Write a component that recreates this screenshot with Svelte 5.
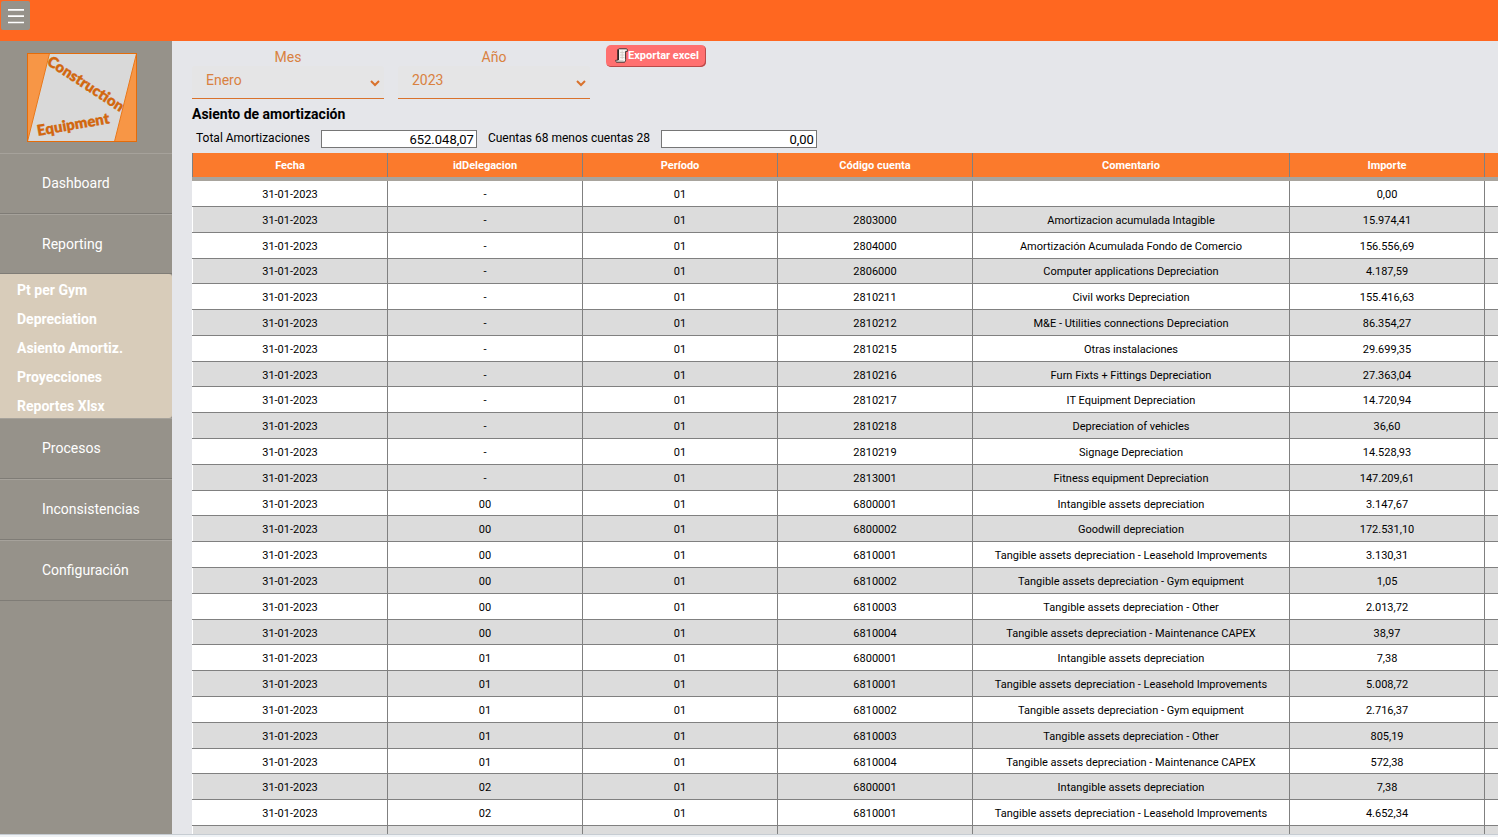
<script>
  const menuTop = ['Dashboard', 'Reporting'];
  const submenu = ['Pt per Gym', 'Depreciation', 'Asiento Amortiz.', 'Proyecciones', 'Reportes Xlsx'];
  const menuBottom = ['Procesos', 'Inconsistencias', 'Configuración'];
  const months = ['Enero', 'Febrero', 'Marzo', 'Abril', 'Mayo', 'Junio', 'Julio', 'Agosto', 'Septiembre', 'Octubre', 'Noviembre', 'Diciembre'];
  const years = ['2021', '2022', '2023'];
  const columns = ['Fecha', 'idDelegacion', 'Período', 'Código cuenta', 'Comentario', 'Importe', ''];

  let month = $state('Enero');
  let year = $state('2023');

  const date = '31-01-2023';
  const period = '01';
  const lease = 'Tangible assets depreciation - Leasehold Improvements';
  const gym = 'Tangible assets depreciation - Gym equipment';
  const other = 'Tangible assets depreciation - Other';
  const capex = 'Tangible assets depreciation - Maintenance CAPEX';
  const intangible = 'Intangible assets depreciation';

  const rows = [
    ['-', '', '', '0,00'],
    ['-', '2803000', 'Amortizacion acumulada Intagible', '15.974,41'],
    ['-', '2804000', 'Amortización Acumulada Fondo de Comercio', '156.556,69'],
    ['-', '2806000', 'Computer applications Depreciation', '4.187,59'],
    ['-', '2810211', 'Civil works Depreciation', '155.416,63'],
    ['-', '2810212', 'M&E - Utilities connections Depreciation', '86.354,27'],
    ['-', '2810215', 'Otras instalaciones', '29.699,35'],
    ['-', '2810216', 'Furn Fixts + Fittings Depreciation', '27.363,04'],
    ['-', '2810217', 'IT Equipment Depreciation', '14.720,94'],
    ['-', '2810218', 'Depreciation of vehicles', '36,60'],
    ['-', '2810219', 'Signage Depreciation', '14.528,93'],
    ['-', '2813001', 'Fitness equipment Depreciation', '147.209,61'],
    ['00', '6800001', intangible, '3.147,67'],
    ['00', '6800002', 'Goodwill depreciation', '172.531,10'],
    ['00', '6810001', lease, '3.130,31'],
    ['00', '6810002', gym, '1,05'],
    ['00', '6810003', other, '2.013,72'],
    ['00', '6810004', capex, '38,97'],
    ['01', '6800001', intangible, '7,38'],
    ['01', '6810001', lease, '5.008,72'],
    ['01', '6810002', gym, '2.716,37'],
    ['01', '6810003', other, '805,19'],
    ['01', '6810004', capex, '572,38'],
    ['02', '6800001', intangible, '7,38'],
    ['02', '6810001', lease, '4.652,34'],
    ['02', '6810002', gym, '1.204,18']
  ];
</script>

<div class="app">
  <header class="topbar">
    <button class="burger" type="button" aria-label="Menú">
      <svg width="16" height="16" viewBox="0 0 16 16" aria-hidden="true">
        <path d="M0 1.800h16M0 8.200h16M0 14.500h16" stroke="#fff" stroke-width="1.700" />
      </svg>
    </button>
  </header>

  <div class="body">
    <nav class="sidebar">
      <div class="brand">
        <svg width="110" height="89" viewBox="0 0 110 89" role="img" aria-label="Construction Equipment">
          <rect x="0.5" y="0.5" width="109" height="88" fill="#d9d9d9" />
          <path d="M0.5 0.5H22.5L0.5 88.5Z" fill="#f79646" stroke="#e8791c" />
          <path d="M109.5 0.5V88.5H87.5Z" fill="#f79646" stroke="#e8791c" />
          <rect x="0.5" y="0.5" width="109" height="88" fill="none" stroke="#e46c0a" />
          <text class="logo-text" transform="translate(19 11) rotate(33)">Construction</text>
          <text class="logo-text" transform="translate(11 83) rotate(-10)">Equipment</text>
        </svg>
      </div>
      {#each menuTop as item}
        <a class="item" href="#{item}">{item}</a>
      {/each}
      <div class="submenu">
        {#each submenu as item}
          <a href="#{item}">{item}</a>
        {/each}
      </div>
      {#each menuBottom as item}
        <a class="item" href="#{item}">{item}</a>
      {/each}
    </nav>

    <main>
      <div class="filters">
        <div class="field">
          <label for="mes">Mes</label>
          <div class="select">
            <select id="mes" bind:value={month}>
              {#each months as m}<option>{m}</option>{/each}
            </select>
            <svg width="10" height="7" viewBox="0 0 10 7" aria-hidden="true"><path d="M1 1l4 4 4-4" /></svg>
          </div>
        </div>
        <div class="field">
          <label for="anio">Año</label>
          <div class="select">
            <select id="anio" bind:value={year}>
              {#each years as y}<option>{y}</option>{/each}
            </select>
            <svg width="10" height="7" viewBox="0 0 10 7" aria-hidden="true"><path d="M1 1l4 4 4-4" /></svg>
          </div>
        </div>
        <button class="export" type="button">
          <svg width="13" height="15" viewBox="0 0 13 15" aria-hidden="true">
            <path d="M3 3C3 1.400 3.300 .8 4.200 .8H11.300C12.200 .8 12.400 1.500 12.400 3.400H10.600V11.500C10.600 13.500 10 14.200 9 14.200H2C1 14.200 .7 13.500 .7 12.300H3Z" fill="#f6f4f0" stroke="#2a2422" stroke-width=".9" />
            <path d="M3.200 1.500V12" stroke="#111" stroke-width="1.200" />
            <path d="M1.200 12.500H8.300L9 13.800H2Z" fill="#b5afa9" />
            <path d="M5 4.500H9.500M5 7H9.500M5 9.500H9.500M7.200 2.500V11" stroke="#cfcac4" stroke-width=".8" />
          </svg>
          <span>Exportar excel</span>
        </button>
      </div>

      <h1>Asiento de amortización</h1>

      <div class="totals">
        <label for="total">Total Amortizaciones</label>
        <input id="total" type="text" value="652.048,07" />
        <label for="diff">Cuentas 68 menos cuentas 28</label>
        <input id="diff" type="text" value="0,00" />
      </div>

      <div class="table-wrap">
        <table>
          <colgroup>
            <col /><col /><col /><col /><col class="wide" /><col /><col />
          </colgroup>
          <thead>
            <tr>
              {#each columns as c}<th scope="col">{c}</th>{/each}
            </tr>
          </thead>
          <tbody>
            {#each rows as [delegation, account, comment, amount]}
              <tr>
                <td>{date}</td>
                <td>{delegation}</td>
                <td>{period}</td>
                <td>{account}</td>
                <td>{comment}</td>
                <td>{amount}</td>
                <td></td>
              </tr>
            {/each}
          </tbody>
        </table>
      </div>
    </main>
  </div>
  <footer></footer>
</div>

<style>
  :global(body) {
    margin: 0;
    overflow: hidden;
  }

  .app {
    display: flex;
    flex-direction: column;
    height: 100vh;
    overflow: hidden;
    background: #e5e6ea;
    color: #000;
    font-family: Roboto, 'Liberation Sans', sans-serif;
  }

  .topbar {
    flex: none;
    height: 41px;
    background: #ff6720;
    box-sizing: border-box;
    padding: 1px;
  }

  .burger {
    display: grid;
    place-items: center;
    width: 29px;
    height: 29px;
    padding: 0;
    border: 0;
    border-radius: 2px;
    background: #96928a;
  }

  .body {
    flex: 1;
    display: flex;
    min-height: 0;
  }

  .sidebar {
    flex: none;
    width: 172px;
    background: #96928a;
    overflow: hidden;
  }

  .brand {
    padding: 12px 27px 11px;
  }

  .brand svg {
    display: block;
  }

  .logo-text {
    font: 800 15px Lato, sans-serif;
    fill: #d2670f;
    stroke: #d2670f;
    stroke-width: 0.3;
  }

  .item {
    display: block;
    padding-left: 42px;
    line-height: 59px;
    border-top: 1px solid #a6a29b;
    border-bottom: 1px solid #7f7c76;
    font-size: 14px;
    color: #fff;
    text-decoration: none;
  }

  .item:has(+ .submenu) {
    line-height: 58px;
  }

  .submenu {
    display: flex;
    flex-direction: column;
    padding-top: 2px;
    height: 142px;
    background: #d8ccba;
    border-radius: 0 3px 3px 0;
  }

  .submenu a {
    padding-left: 17px;
    line-height: 29px;
    font-size: 14px;
    font-weight: 700;
    color: #fff;
    text-decoration: none;
  }

  main {
    flex: 1;
    min-width: 0;
    display: flex;
    flex-direction: column;
    padding-left: 20px;
  }

  .filters {
    display: flex;
    align-items: flex-start;
    gap: 14px;
    padding-top: 7px;
  }

  .field {
    display: flex;
    flex-direction: column;
    width: 192px;
    color: #d9813f;
    font-size: 14px;
  }

  .field label {
    line-height: 18px;
    text-align: center;
  }

  .select {
    display: grid;
    align-items: center;
  }

  .select select,
  .select svg {
    grid-area: 1 / 1;
  }

  .select select {
    appearance: none;
    height: 33px;
    padding: 0 14px 4px;
    border: 0;
    border-bottom: 1px solid #d9722c;
    border-radius: 3px 3px 0 0;
    background: #e5e5e6;
    color: inherit;
    font: 14px Roboto, sans-serif;
  }

  .select svg {
    justify-self: end;
    margin: 2px 4px 0 0;
    fill: none;
    stroke: #d9722c;
    stroke-width: 2;
    pointer-events: none;
  }

  .export {
    display: flex;
    align-items: center;
    height: 22px;
    margin: -3px 0 0 2px;
    padding: 0 7px 1px 9px;
    border: 0;
    border-radius: 5px;
    background: #ff7070;
    box-shadow: inset -1px -1px 0 #b94a4a;
    color: #fff;
    font: 700 11px Roboto, sans-serif;
  }

  h1 {
    margin: 5px 0 6px;
    font-size: 14px;
    font-weight: 700;
    line-height: 20px;
  }

  .totals {
    display: flex;
    align-items: flex-start;
    padding-left: 4px;
    gap: 11px;
    font-size: 12px;
    line-height: 16px;
  }

  .totals input {
    box-sizing: border-box;
    width: 156px;
    height: 18px;
    padding: 0 2px;
    border: 1px solid #767676;
    background: #fff;
    font: 13px Roboto, sans-serif;
    text-align: right;
  }

  .table-wrap {
    flex: 1;
    min-height: 0;
    margin-top: 5px;
    overflow: hidden;
  }

  table {
    table-layout: fixed;
    border-collapse: collapse;
    width: 1487px;
    height: 699px;
    font-size: 11px;
    line-height: 13px;
    text-align: center;
  }

  col {
    width: 195px;
  }

  .wide {
    width: 317px;
  }

  th {
    height: 24px;
    padding: 0;
    background: #fb7a2c;
    border-left: 1px solid #808080;
    border-right: 1px solid #808080;
    border-bottom: 4px solid #a8a49d;
    color: #fff;
    font-weight: 700;
  }

  td {
    padding: 6px 0 4px;
    border: 1px solid #808080;
    background: #fff;
  }

  td:first-child {
    border-left-color: #fff;
  }

  tbody tr:nth-child(even) td {
    background: #dcdcdc;
  }

  footer {
    flex: none;
    height: 2px;
    border-top: 1px solid #c6ccd2;
    background: #eff2f5;
  }
</style>
